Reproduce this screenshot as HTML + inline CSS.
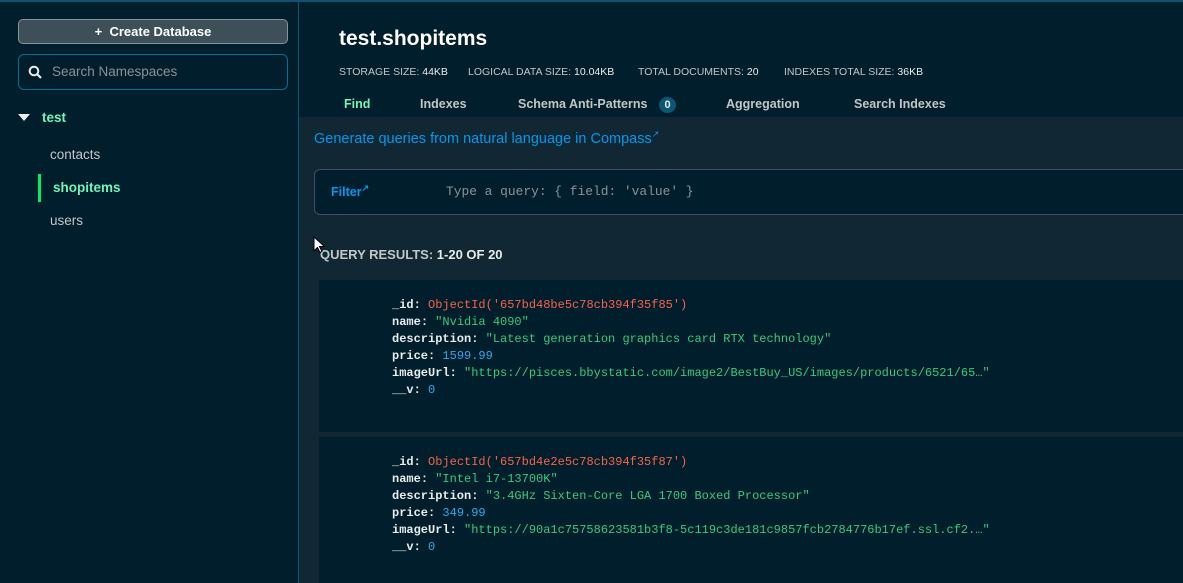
<!DOCTYPE html>
<html><head><meta charset="utf-8"><style>
*{margin:0;padding:0;box-sizing:border-box}
body{width:1183px;height:583px;overflow:hidden;background:#001e2b;font-family:"Liberation Sans",sans-serif;position:relative}
.a{position:absolute;white-space:nowrap}
.mono{font-family:"Liberation Mono",monospace;font-size:12px}
.k{color:#e8edeb;font-weight:bold}
.s{color:#3ac97a}
.o{color:#f9624b}
.n{color:#30a9f0}
</style></head><body>
<div class="a" style="left:0;top:0;width:1183px;height:2px;background:#0f5274"></div>
<div class="a" style="left:298px;top:0;width:1px;height:583px;background:#0b5673"></div>
<div class="a" style="left:18px;top:19px;width:270px;height:25px;border:1px solid #889397;border-radius:5px;background:#3d4f58;color:#fff;font-weight:bold;font-size:13px;text-align:center;line-height:23px">+&nbsp; Create Database</div>
<div class="a" style="left:18px;top:54px;width:270px;height:36px;border:1px solid #0b6c94;border-radius:6px"></div>
<svg class="a" style="left:28px;top:65px" width="14" height="14" viewBox="0 0 14 14"><circle cx="6" cy="6" r="4.3" fill="none" stroke="#e8edeb" stroke-width="2"/><path d="M9 9l4 4" stroke="#e8edeb" stroke-width="2.2"/></svg>
<div class="a" style="left:52px;top:64px;font-size:13.5px;color:#889397">Search Namespaces</div>
<div class="a" style="left:18px;top:114px;width:0;height:0;border-left:6px solid transparent;border-right:6px solid transparent;border-top:7px solid #e8edeb"></div>
<div class="a" style="left:42px;top:110px;font-size:13.5px;font-weight:bold;color:#71f6ba">test</div>
<div class="a" style="left:50px;top:147px;font-size:13.5px;color:#c1c7c6">contacts</div>
<div class="a" style="left:38px;top:174px;width:3px;height:28px;background:#00ed64"></div>
<div class="a" style="left:53px;top:180px;font-size:13.5px;font-weight:bold;color:#71f6ba">shopitems</div>
<div class="a" style="left:50px;top:213px;font-size:13.5px;color:#c1c7c6">users</div>
<div class="a" style="left:299px;top:117px;width:884px;height:466px;background:#112733"></div>
<div class="a" style="left:339px;top:27px;font-size:21px;font-weight:bold;color:#fff">test.shopitems</div>
<div class="a" style="left:339px;top:66px;font-size:10.5px;color:#c1c7c6">STORAGE SIZE: <span style="color:#e8edeb">44KB</span></div>
<div class="a" style="left:468px;top:66px;font-size:10.5px;color:#c1c7c6">LOGICAL DATA SIZE: <span style="color:#e8edeb">10.04KB</span></div>
<div class="a" style="left:638px;top:66px;font-size:10.5px;color:#c1c7c6">TOTAL DOCUMENTS: <span style="color:#e8edeb">20</span></div>
<div class="a" style="left:784px;top:66px;font-size:10.5px;color:#c1c7c6">INDEXES TOTAL SIZE: <span style="color:#e8edeb">36KB</span></div>
<div class="a" style="left:344px;top:97px;font-size:12.5px;font-weight:bold;color:#71f6ba">Find</div>
<div class="a" style="left:420px;top:97px;font-size:12.5px;font-weight:bold;color:#c1c7c6">Indexes</div>
<div class="a" style="left:518px;top:97px;font-size:12.5px;font-weight:bold;color:#c1c7c6">Schema Anti-Patterns</div>
<div class="a" style="left:659px;top:97px;width:17px;height:16px;border-radius:8px;background:#0b5673;color:#e8edeb;font-size:11px;font-weight:bold;text-align:center;line-height:16px">0</div>
<div class="a" style="left:726px;top:97px;font-size:12.5px;font-weight:bold;color:#c1c7c6">Aggregation</div>
<div class="a" style="left:854px;top:97px;font-size:12.5px;font-weight:bold;color:#c1c7c6">Search Indexes</div>
<div class="a" style="left:314px;top:129px;font-size:14.5px;color:#0498ec">Generate queries from natural language in Compass<sup style="font-size:9px">↗</sup></div>
<div class="a" style="left:314px;top:169px;width:880px;height:46px;border:1px solid #3d4f58;border-radius:6px;background:#001e2b"></div>
<div class="a" style="left:331px;top:183px;font-size:12.5px;font-weight:bold;color:#0498ec">Filter<sup style="font-size:9px">↗</sup></div>
<div class="a mono" style="left:446px;top:184px;color:#889397;font-size:12.9px">Type a query: { field: 'value' }</div>
<div class="a" style="left:320px;top:247px;font-size:13px;font-weight:bold;color:#c1c7c6">QUERY RESULTS: <span style="color:#e8edeb">1-20 OF 20</span></div>
<div class="a" style="left:319px;top:280px;width:864px;height:152px;background:#001e2b"></div>
<div class="a" style="left:319px;top:437px;width:864px;height:146px;background:#001e2b"></div>
<div class="a mono" style="left:392px;top:297px;line-height:17px">
<div><span class="k">_id:</span> <span class="o">ObjectId('657bd48be5c78cb394f35f85')</span></div>
<div><span class="k">name</span><span class="k">: </span><span class="s">"Nvidia 4090"</span></div>
<div><span class="k">description</span><span class="k">: </span><span class="s">"Latest generation graphics card RTX technology"</span></div>
<div><span class="k">price</span><span class="k">: </span><span class="n">1599.99</span></div>
<div><span class="k">imageUrl</span><span class="k">: </span><span class="s">"https://pisces.bbystatic.com/image2/BestBuy_US/images/products/6521/65…"</span></div>
<div><span class="k">__v</span><span class="k">: </span><span class="n">0</span></div>
</div>
<div class="a mono" style="left:392px;top:454px;line-height:17px">
<div><span class="k">_id:</span> <span class="o">ObjectId('657bd4e2e5c78cb394f35f87')</span></div>
<div><span class="k">name</span><span class="k">: </span><span class="s">"Intel i7-13700K"</span></div>
<div><span class="k">description</span><span class="k">: </span><span class="s">"3.4GHz Sixten-Core LGA 1700 Boxed Processor"</span></div>
<div><span class="k">price</span><span class="k">: </span><span class="n">349.99</span></div>
<div><span class="k">imageUrl</span><span class="k">: </span><span class="s">"https://90a1c75758623581b3f8-5c119c3de181c9857fcb2784776b17ef.ssl.cf2.…"</span></div>
<div><span class="k">__v</span><span class="k">: </span><span class="n">0</span></div>
</div>
<svg class="a" style="left:313px;top:236px" width="12" height="18" viewBox="0 0 12 18"><path d="M1 1v14l3.5-3.5 2.5 5 2-1-2.5-5h5z" fill="#fff" stroke="#000" stroke-width="1"/></svg>
</body></html>
